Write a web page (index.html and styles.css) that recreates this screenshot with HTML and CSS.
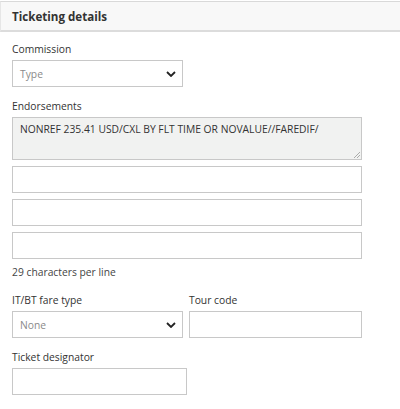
FILE: index.html
```html
<!DOCTYPE html>
<html>
<head>
<meta charset="utf-8">
<link rel="stylesheet" href="styles.css">
</head>
<body>
<div class="panel">
  <div class="header">Ticketing details</div>
  <div class="form">
    <div class="label first">Commission</div>
    <div class="select w171">
      <span class="placeholder">Type</span>
      <svg class="chev" width="10" height="6" viewBox="0 0 10 6"><polyline points="1,1 5,5 9,1" fill="none" stroke="#222" stroke-width="1.8"/></svg>
    </div>
    <div class="label gap">Endorsements</div>
    <div class="textarea">NONREF 235.41 USD/CXL BY FLT TIME OR NOVALUE//FAREDIF/
      <svg class="grip" width="7" height="7" viewBox="0 0 7 7"><line x1="1" y1="7" x2="7" y2="1" stroke="#999" stroke-width="0.8"/><line x1="4" y1="7" x2="7" y2="4" stroke="#999" stroke-width="0.8"/></svg>
    </div>
    <div class="input full"></div>
    <div class="input full"></div>
    <div class="input full"></div>
    <div class="hint">29 characters per line</div>
    <div class="row">
      <div class="col">
        <div class="label">IT/BT fare type</div>
        <div class="select w171">
          <span class="placeholder">None</span>
          <svg class="chev" width="10" height="6" viewBox="0 0 10 6"><polyline points="1,1 5,5 9,1" fill="none" stroke="#222" stroke-width="1.8"/></svg>
        </div>
      </div>
      <div class="col">
        <div class="label">Tour code</div>
        <div class="input w173"></div>
      </div>
    </div>
    <div class="label gap">Ticket designator</div>
    <div class="input w175"></div>
  </div>
</div>
</body>
</html>
```
FILE: styles.css
```css
* { box-sizing: border-box; }
html, body { margin: 0; padding: 0; background: #fff; }
body {
  font-family: "Open Sans", "Noto Sans", sans-serif;
  font-size: 10.3px;
  color: #333;
  padding-top: 1px;
}
.header {
  height: 31px;
  border-top: 1px solid #d9d9d9;
  border-bottom: 2px solid #dcdcdc;
  border-left: 1px solid #e6e6e6;
  background: #f8f8f8;
  font-weight: 700;
  font-size: 11.6px;
  line-height: 26px;
  padding-top: 2px;
  padding-left: 11px;
  color: #333;
}
.form {
  padding: 0 12px;
}
.label {
  line-height: 15px;
  height: 15px;
  margin-bottom: 3px;
  color: #333;
}
.label.first { margin-top: 10px; }
.label.gap { margin-top: 12px; }
.select, .input, .textarea {
  border: 1px solid #c8c8c8;
  background: #fff;
}
.select {
  height: 27px;
  display: flex;
  align-items: center;
  justify-content: space-between;
  padding: 0 6px 0 7px;
}
.placeholder { color: #8a8a8a; }
.chev { display: block; }
.w171 { width: 171px; }
.w173 { width: 173px; }
.w175 { width: 175px; }
.full { width: 350px; }
.textarea {
  width: 350px;
  height: 43px;
  background: #f1f2f1;
  padding: 4px 7px;
  line-height: 15px;
  position: relative;
  color: #333;
}
.grip { position: absolute; right: 1px; bottom: 1px; }
.input { height: 27px; }
.textarea + .input { margin-top: 6px; }
.input.full + .input.full { margin-top: 6px; }
.hint {
  margin-top: 6px;
  line-height: 15px;
  color: #444;
}
.row {
  display: flex;
  gap: 6px;
  margin-top: 13px;
}
```
